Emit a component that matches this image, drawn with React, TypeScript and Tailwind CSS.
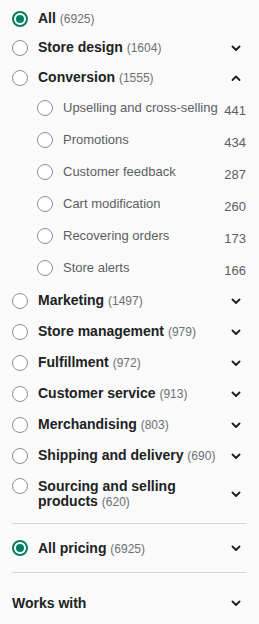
import React from "react";

const subCats: [string, number][] = [
  ["Upselling and cross-selling", 441],
  ["Promotions", 434],
  ["Customer feedback", 287],
  ["Cart modification", 260],
  ["Recovering orders", 173],
  ["Store alerts", 166],
];

const moreCats: [string, number][] = [
  ["Marketing", 1497],
  ["Store management", 979],
  ["Fulfillment", 972],
  ["Customer service", 913],
  ["Merchandising", 803],
  ["Shipping and delivery", 690],
];

function Chevron({ up }: { up?: boolean }) {
  return (
    <svg width="12" height="12" viewBox="0 0 12 12" fill="none" className="shrink-0">
      <path
        d={up ? "M2.5 8l3.5-3.5 3.5 3.5" : "M2.5 4.5l3.5 3.5 3.5-3.5"}
        stroke="#202223"
        strokeWidth="1.9"
        strokeLinecap="round"
        strokeLinejoin="round"
      />
    </svg>
  );
}

function Radio({ checked }: { checked?: boolean }) {
  if (checked) {
    return (
      <span className="flex h-4 w-4 shrink-0 items-center justify-center rounded-full border-2 border-[#008060] bg-white">
        <span className="h-2 w-2 rounded-full bg-[#008060]" />
      </span>
    );
  }
  return <span className="block h-4 w-4 shrink-0 rounded-full border border-[#8c9196] bg-white" />;
}

function MainRow({ name, count, checked, chevron, up, h }: { name: string; count: number; checked?: boolean; chevron?: boolean; up?: boolean; h: string }) {
  return (
    <div className={`flex items-center ${h}`}>
      <Radio checked={checked} />
      <div className="ml-[10px] flex-1 text-[14px] font-bold leading-4 text-[#202223]">
        {name} <span className="text-[12px] font-normal text-[#6d7175]">({count})</span>
      </div>
      {chevron && (
        <div className="mr-[2px] flex w-4 justify-center">
          <Chevron up={up} />
        </div>
      )}
    </div>
  );
}

export default function App() {
  return (
    <div className="min-h-[624px] w-[259px] bg-[#fafafa] pl-3 pr-[13px] pt-[5px]" style={{ fontFamily: "'Liberation Sans', Arial, sans-serif" }}>
      <MainRow name="All" count={6925} checked h="h-[27px]" />
      <MainRow name="Store design" count={1604} chevron h="h-[31px]" />
      <MainRow name="Conversion" count={1555} chevron up h="h-[29px]" />
      <div className="pl-[25px]">
        {subCats.map(([name, count]) => (
          <div key={name} className="flex h-8 items-center">
            <Radio />
            <span className="ml-[10px] flex-1 whitespace-nowrap text-[13px] leading-4 text-[#5c5f62]">{name}</span>
            <span className="mt-[6px] text-[13px] leading-4 text-[#5c5f62]">{count}</span>
          </div>
        ))}
      </div>
      <div className="h-px" />
      {moreCats.map(([name, count]) => (
        <MainRow key={name} name={name} count={count} chevron h="h-[31px]" />
      ))}
      <div className="flex h-[46px] items-center">
        <div className="self-start pt-[7px]">
          <Radio />
        </div>
        <div className="ml-[10px] flex-1 text-[14px] font-bold leading-[15px] text-[#202223]">
          Sourcing and selling
          <br />
          products <span className="text-[12px] font-normal text-[#6d7175]">(620)</span>
        </div>
        <div className="mr-[2px] flex w-4 justify-center">
          <Chevron />
        </div>
      </div>
      <div className="mt-[6px] border-t border-[#d2d5d8]" />
      <MainRow name="All pricing" count={6925} checked chevron h="h-[48px]" />
      <div className="border-t border-[#d2d5d8]" />
      <div className="flex h-[60px] items-center">
        <div className="flex-1 text-[14px] font-bold text-[#202223]">Works with</div>
        <div className="mr-[2px] flex w-4 justify-center">
          <Chevron />
        </div>
      </div>
    </div>
  );
}
